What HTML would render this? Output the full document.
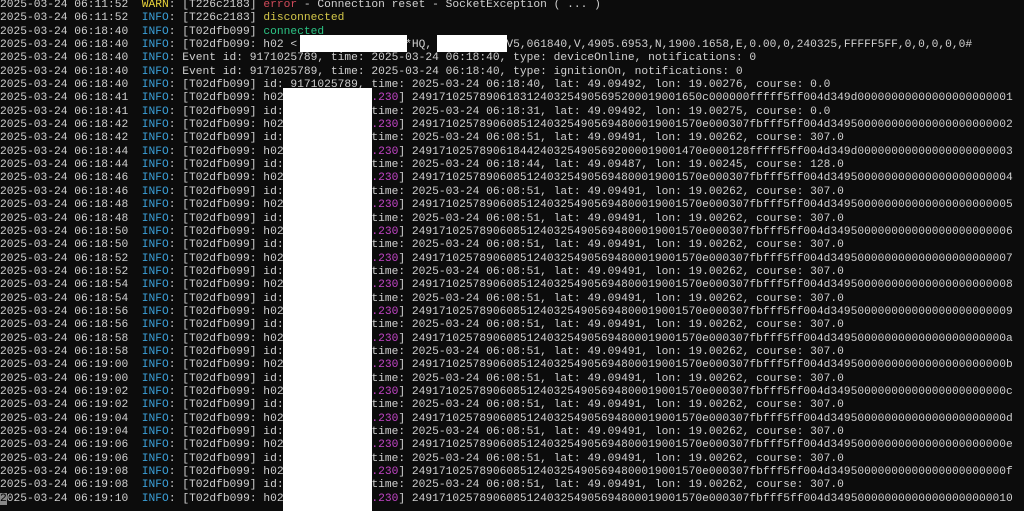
<!DOCTYPE html>
<html><head><meta charset="utf-8"><style>
html,body{margin:0;padding:0;background:#0c0c0c;width:1024px;height:511px;overflow:hidden;position:relative}
pre{margin:0;position:absolute;left:0;top:-1px;font-family:"Liberation Mono",monospace;font-size:11.25px;line-height:13.35px;color:#d0d0d0;white-space:pre}
.w{color:#e8d33a}.i{color:#3a9fd8}.r{color:#d04a5a}.y{color:#d4c84a}.g{color:#2cc485}.m{color:#c445c8}
.c{background:#888;color:#000}
.b{position:absolute;background:#fff}
</style></head><body>
<pre>2025-03-24 06:11:52  <span class="w">WARN</span>: [T226c2183] <span class="r">error</span> - Connection reset - SocketException ( ... )
2025-03-24 06:11:52  <span class="i">INFO</span>: [T226c2183] <span class="y">disconnected</span>
2025-03-24 06:18:40  <span class="i">INFO</span>: [T02dfb099] <span class="g">connected</span>
2025-03-24 06:18:40  <span class="i">INFO</span>: [T02dfb099: h02 <                *HQ,          ,V5,061840,V,4905.6953,N,1900.1658,E,0.00,0,240325,FFFFF5FF,0,0,0,0,0#
2025-03-24 06:18:40  <span class="i">INFO</span>: Event id: 9171025789, time: 2025-03-24 06:18:40, type: deviceOnline, notifications: 0
2025-03-24 06:18:40  <span class="i">INFO</span>: Event id: 9171025789, time: 2025-03-24 06:18:40, type: ignitionOn, notifications: 0
2025-03-24 06:18:40  <span class="i">INFO</span>: [T02dfb099] id: 9171025789, time: 2025-03-24 06:18:40, lat: 49.09492, lon: 19.00276, course: 0.0
2025-03-24 06:18:41  <span class="i">INFO</span>: [T02dfb099: h02             <span class="m">.230</span>] 2491710257890618312403254905695200019001650c000000fffff5ff004d349d00000000000000000000001
2025-03-24 06:18:41  <span class="i">INFO</span>: [T02dfb099] id: 9171025789, time: 2025-03-24 06:18:31, lat: 49.09492, lon: 19.00275, course: 0.0
2025-03-24 06:18:42  <span class="i">INFO</span>: [T02dfb099: h02             <span class="m">.230</span>] 2491710257890608512403254905694800019001570e000307fbfff5ff004d349500000000000000000000002
2025-03-24 06:18:42  <span class="i">INFO</span>: [T02dfb099] id: 9171025789, time: 2025-03-24 06:08:51, lat: 49.09491, lon: 19.00262, course: 307.0
2025-03-24 06:18:44  <span class="i">INFO</span>: [T02dfb099: h02             <span class="m">.230</span>] 2491710257890618442403254905692000019001470e000128fffff5ff004d349d00000000000000000000003
2025-03-24 06:18:44  <span class="i">INFO</span>: [T02dfb099] id: 9171025789, time: 2025-03-24 06:18:44, lat: 49.09487, lon: 19.00245, course: 128.0
2025-03-24 06:18:46  <span class="i">INFO</span>: [T02dfb099: h02             <span class="m">.230</span>] 2491710257890608512403254905694800019001570e000307fbfff5ff004d349500000000000000000000004
2025-03-24 06:18:46  <span class="i">INFO</span>: [T02dfb099] id: 9171025789, time: 2025-03-24 06:08:51, lat: 49.09491, lon: 19.00262, course: 307.0
2025-03-24 06:18:48  <span class="i">INFO</span>: [T02dfb099: h02             <span class="m">.230</span>] 2491710257890608512403254905694800019001570e000307fbfff5ff004d349500000000000000000000005
2025-03-24 06:18:48  <span class="i">INFO</span>: [T02dfb099] id: 9171025789, time: 2025-03-24 06:08:51, lat: 49.09491, lon: 19.00262, course: 307.0
2025-03-24 06:18:50  <span class="i">INFO</span>: [T02dfb099: h02             <span class="m">.230</span>] 2491710257890608512403254905694800019001570e000307fbfff5ff004d349500000000000000000000006
2025-03-24 06:18:50  <span class="i">INFO</span>: [T02dfb099] id: 9171025789, time: 2025-03-24 06:08:51, lat: 49.09491, lon: 19.00262, course: 307.0
2025-03-24 06:18:52  <span class="i">INFO</span>: [T02dfb099: h02             <span class="m">.230</span>] 2491710257890608512403254905694800019001570e000307fbfff5ff004d349500000000000000000000007
2025-03-24 06:18:52  <span class="i">INFO</span>: [T02dfb099] id: 9171025789, time: 2025-03-24 06:08:51, lat: 49.09491, lon: 19.00262, course: 307.0
2025-03-24 06:18:54  <span class="i">INFO</span>: [T02dfb099: h02             <span class="m">.230</span>] 2491710257890608512403254905694800019001570e000307fbfff5ff004d349500000000000000000000008
2025-03-24 06:18:54  <span class="i">INFO</span>: [T02dfb099] id: 9171025789, time: 2025-03-24 06:08:51, lat: 49.09491, lon: 19.00262, course: 307.0
2025-03-24 06:18:56  <span class="i">INFO</span>: [T02dfb099: h02             <span class="m">.230</span>] 2491710257890608512403254905694800019001570e000307fbfff5ff004d349500000000000000000000009
2025-03-24 06:18:56  <span class="i">INFO</span>: [T02dfb099] id: 9171025789, time: 2025-03-24 06:08:51, lat: 49.09491, lon: 19.00262, course: 307.0
2025-03-24 06:18:58  <span class="i">INFO</span>: [T02dfb099: h02             <span class="m">.230</span>] 2491710257890608512403254905694800019001570e000307fbfff5ff004d34950000000000000000000000a
2025-03-24 06:18:58  <span class="i">INFO</span>: [T02dfb099] id: 9171025789, time: 2025-03-24 06:08:51, lat: 49.09491, lon: 19.00262, course: 307.0
2025-03-24 06:19:00  <span class="i">INFO</span>: [T02dfb099: h02             <span class="m">.230</span>] 2491710257890608512403254905694800019001570e000307fbfff5ff004d34950000000000000000000000b
2025-03-24 06:19:00  <span class="i">INFO</span>: [T02dfb099] id: 9171025789, time: 2025-03-24 06:08:51, lat: 49.09491, lon: 19.00262, course: 307.0
2025-03-24 06:19:02  <span class="i">INFO</span>: [T02dfb099: h02             <span class="m">.230</span>] 2491710257890608512403254905694800019001570e000307fbfff5ff004d34950000000000000000000000c
2025-03-24 06:19:02  <span class="i">INFO</span>: [T02dfb099] id: 9171025789, time: 2025-03-24 06:08:51, lat: 49.09491, lon: 19.00262, course: 307.0
2025-03-24 06:19:04  <span class="i">INFO</span>: [T02dfb099: h02             <span class="m">.230</span>] 2491710257890608512403254905694800019001570e000307fbfff5ff004d34950000000000000000000000d
2025-03-24 06:19:04  <span class="i">INFO</span>: [T02dfb099] id: 9171025789, time: 2025-03-24 06:08:51, lat: 49.09491, lon: 19.00262, course: 307.0
2025-03-24 06:19:06  <span class="i">INFO</span>: [T02dfb099: h02             <span class="m">.230</span>] 2491710257890608512403254905694800019001570e000307fbfff5ff004d34950000000000000000000000e
2025-03-24 06:19:06  <span class="i">INFO</span>: [T02dfb099] id: 9171025789, time: 2025-03-24 06:08:51, lat: 49.09491, lon: 19.00262, course: 307.0
2025-03-24 06:19:08  <span class="i">INFO</span>: [T02dfb099: h02             <span class="m">.230</span>] 2491710257890608512403254905694800019001570e000307fbfff5ff004d34950000000000000000000000f
2025-03-24 06:19:08  <span class="i">INFO</span>: [T02dfb099] id: 9171025789, time: 2025-03-24 06:08:51, lat: 49.09491, lon: 19.00262, course: 307.0
<span class="c">2</span>025-03-24 06:19:10  <span class="i">INFO</span>: [T02dfb099: h02             <span class="m">.230</span>] 2491710257890608512403254905694800019001570e000307fbfff5ff004d349500000000000000000000010</pre>
<div class="b" style="left:300px;top:35px;width:107px;height:17px"></div>
<div class="b" style="left:437px;top:35px;width:70px;height:17px"></div>
<div class="b" style="left:283px;top:88px;width:89px;height:423px"></div>
</body></html>
